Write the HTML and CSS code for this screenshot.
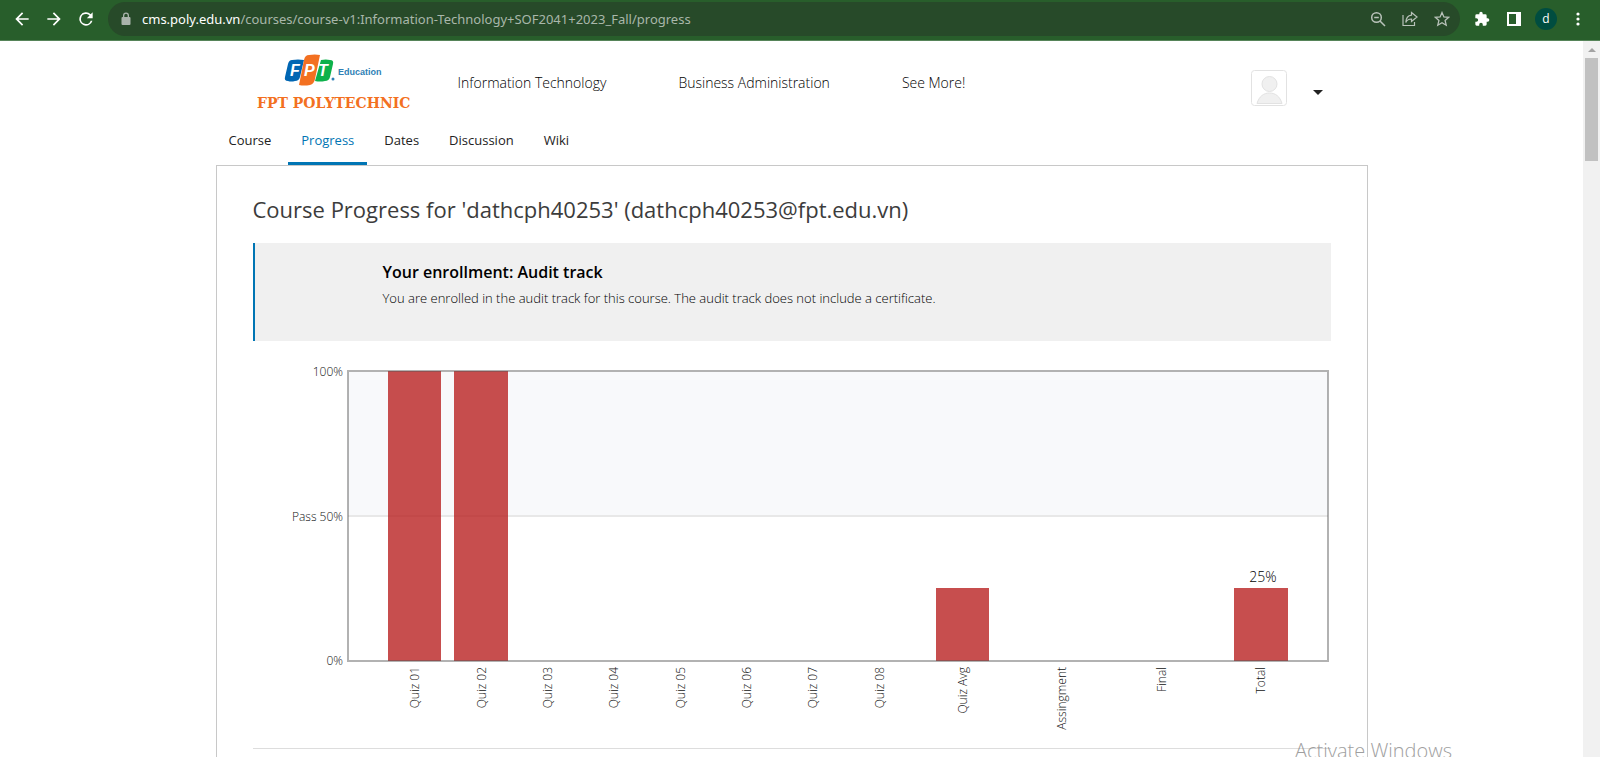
FILE: index.html
```html
<!DOCTYPE html>
<html lang="en">
<head>
<meta charset="utf-8">
<title>Course Progress</title>
<link rel="stylesheet" href="styles.css">
</head>
<body>
<div class="toolbar">
  <button class="tool" aria-label="Back"><svg class="icon" viewBox="0 0 24 24"><path fill="#fff" d="M20 11H7.83l5.59-5.59L12 4l-8 8 8 8 1.41-1.41L7.83 13H20z"/></svg></button>
  <button class="tool" aria-label="Forward"><svg class="icon" viewBox="0 0 24 24"><path fill="#fff" d="M4 11h12.170l-5.590-5.590L12 4l8 8-8 8-1.410-1.410L16.170 13H4z"/></svg></button>
  <button class="tool" aria-label="Reload"><svg class="icon" viewBox="0 0 24 24"><path fill="#fff" d="M17.650 6.350A8 8 0 1 0 19.730 14h-2.080A6 6 0 1 1 12 6c1.660 0 3.140.69 4.220 1.780L13 11h7V4z"/></svg></button>
  <div class="omnibox">
    <svg class="lock" viewBox="0 0 10 14"><path fill="#a9b3ab" d="M1.500 5H2V3.500a3 3 0 0 1 6 0V5h.5A1 1 0 0 1 9.500 6v6a1 1 0 0 1-1 1h-7a1 1 0 0 1-1-1V6a1 1 0 0 1 1-1zM3.300 5h3.400V3.500a1.700 1.700 0 0 0-3.400 0z"/></svg>
    <div class="url"><span class="host">cms.poly.edu.vn</span>/courses/course-v1:Information-Technology+SOF2041+2023_Fall/progress</div>
    <button class="tool" aria-label="Zoom"><svg class="icon small" viewBox="0 0 16 16" fill="none" stroke="#b9c2ba" stroke-width="1.500"><circle cx="6.500" cy="6.500" r="4.800"/><path d="M10 10l5 5M4.200 6.500h4.600"/></svg></button>
    <button class="tool" aria-label="Share"><svg class="icon small" viewBox="0 0 16 16" fill="none" stroke="#b9c2ba" stroke-width="1.200"><path d="M1 4v10.500h11.500V11M9.500 1.500l5.500 4.500-5.500 4.500V8C6.500 8 4.800 9 3.800 11.500 4 7.500 6 4.500 9.500 4.200z"/></svg></button>
    <button class="tool" aria-label="Bookmark"><svg class="icon small" viewBox="0 0 16 16" fill="none" stroke="#b9c2ba" stroke-width="1.300"><path d="M8 1.500l1.900 4.400 4.800.4-3.600 3.200 1.100 4.700L8 11.700l-4.200 2.500 1.100-4.700L1.300 6.300l4.800-.4z"/></svg></button>
  </div>
  <button class="tool" aria-label="Extensions"><svg class="icon small" viewBox="0 0 24 24"><path fill="#fff" d="M20.500 11H19V7a2 2 0 0 0-2-2h-4V3.500a2.500 2.500 0 0 0-5 0V5H4a2 2 0 0 0-2 2v3.800h1.500a2.700 2.700 0 0 1 0 5.400H2V20a2 2 0 0 0 2 2h3.800v-1.500a2.700 2.700 0 0 1 5.400 0V22H17a2 2 0 0 0 2-2v-4h1.500a2.500 2.500 0 0 0 0-5z"/></svg></button>
  <button class="tool" aria-label="Side panel"><svg class="icon small" viewBox="0 0 16 16"><path fill="#fff" fill-rule="evenodd" d="M1 1h14v14H1zM3 3v10h7V3z"/></svg></button>
  <button class="tool" aria-label="Profile"><span class="profile">d</span></button>
  <button class="tool" aria-label="Menu"><svg class="icon small" viewBox="0 0 16 16" fill="#fff"><circle cx="8" cy="3" r="1.600"/><circle cx="8" cy="8" r="1.600"/><circle cx="8" cy="13" r="1.600"/></svg></button>
</div>
<div class="viewport">
  <div class="page">
    <header class="header">
      <a class="logo" href="#"><svg viewBox="0 0 156 58" width="156" height="58" role="img" aria-label="FPT Education, FPT Polytechnic">
        <path fill="#0066b3" d="M37 6q6-1 12 0l-4 17q-1 4-5 4-4 1-7 0-4 0-3-4l3-13q1-4 4-4z"/>
        <path fill="#0db14b" d="M66 6q5-1 9 0 4 0 3 4l-3 13q-1 4-5 4-5 1-10 0z"/>
        <path fill="#f37021" d="M54 1q6-1 11 0l-5 24q-1 5-5 6-6 1-11 0l5-25q1-5 5-5z"/>
        <g class="logo-letters"><text x="35" y="22">F</text><text x="49" y="22">P</text><text x="63" y="22">T</text></g>
        <circle cx="78" cy="25" r="1.500" fill="#2f7fb5"/>
        <text class="logo-education" x="83" y="21">Education</text>
        <text class="logo-name" x="2" y="54">FPT POLYTECHNIC</text>
      </svg></a>
      <nav class="main-nav"><a href="#">Information Technology</a><a href="#">Business Administration</a><a href="#">See More!</a></nav>
      <div class="user">
        <svg class="avatar" viewBox="0 0 36 36" fill="#f0f0f0" stroke="#e2e2e2"><rect x=".5" y=".5" width="35" height="35" rx="3" fill="#fff"/><circle cx="18.500" cy="14" r="7.500"/><path d="M6 33.500c2-7 6.500-10.500 12.500-10.500S29 26.500 31 33.500z"/></svg>
        <button class="caret-button" aria-label="Account options"><svg class="caret" viewBox="0 0 10 5"><path fill="#222" d="M0 0h10L5 5z"/></svg></button>
      </div>
    </header>
    <nav class="tabs"><a href="#">Course</a><a class="active" href="#">Progress</a><a href="#">Dates</a><a href="#">Discussion</a><a href="#">Wiki</a></nav>
    <main class="content">
      <h1>Course Progress for 'dathcph40253' (dathcph40253@fpt.edu.vn)</h1>
      <section class="notice"><h2>Your enrollment: Audit track</h2><p>You are enrolled in the audit track for this course. The audit track does not include a certificate.</p></section>
      <svg class="chart" viewBox="0 0 1078 407" role="img" aria-label="Grades by assignment">
        <rect x="95" y="31" width="980" height="144" fill="#f8f9fb"/>
        <path d="M95 175h980" stroke="#e8e8e8" stroke-width="2"/>
        <g class="bars"><rect x="135" y="30" width="53" height="290"/><rect x="201" y="30" width="54" height="290"/><rect x="683" y="247" width="53" height="73"/><rect x="981" y="247" width="54" height="73"/></g>
        <rect x="95" y="30" width="980" height="290" fill="none" stroke="#545454" stroke-opacity=".45" stroke-width="2"/>
        <g class="axis" text-anchor="end">
          <text x="90" y="35">100%</text><text x="90" y="180">Pass 50%</text><text x="90" y="324">0%</text>
          <text transform="translate(166 326) rotate(-90)">Quiz 01</text>
          <text transform="translate(233 326) rotate(-90)">Quiz 02</text>
          <text transform="translate(299 326) rotate(-90)">Quiz 03</text>
          <text transform="translate(365 326) rotate(-90)">Quiz 04</text>
          <text transform="translate(432 326) rotate(-90)">Quiz 05</text>
          <text transform="translate(498 326) rotate(-90)">Quiz 06</text>
          <text transform="translate(564 326) rotate(-90)">Quiz 07</text>
          <text transform="translate(631 326) rotate(-90)">Quiz 08</text>
          <text transform="translate(714 326) rotate(-90)">Quiz Avg</text>
          <text transform="translate(813 326) rotate(-90)">Assingment</text>
          <text transform="translate(913 326) rotate(-90)">Final</text>
          <text transform="translate(1012 326) rotate(-90)">Total</text>
        </g>
        <text class="value" x="1010" y="241" text-anchor="middle">25%</text>
      </svg>
      <hr>
    </main>
  </div>
  <div class="scrollbar"><svg class="scroll-arrow" viewBox="0 0 8 4"><path fill="#a3a3a3" d="M4 0l4 4H0z"/></svg><div class="thumb"></div></div>
</div>
<div class="watermark">Activate Windows</div>
</body>
</html>
```
FILE: styles.css
```css
* { box-sizing: border-box; }
body { margin: 0; height: 100vh; display: flex; flex-direction: column; overflow: hidden; background: #fff; color: #000; font-family: "Open Sans", sans-serif; font-size: 13px; font-weight: 300; }
a { color: inherit; text-decoration: none; }
button { border: 0; padding: 0; background: none; font: inherit; }
h1, h2, p { margin: 0; }
svg { display: block; }

.toolbar { flex: none; height: 41px; display: flex; align-items: center; padding: 0 6px 3px; background: #285e2b; border-bottom: 1px solid #568459; font-weight: 400; }
.tool { width: 32px; display: flex; justify-content: center; align-items: center; }
.icon { width: 20px; height: 20px; }
.icon.small { width: 16px; height: 16px; }
.omnibox { flex: 1; height: 34px; margin: 0 6px; padding: 0 2px 0 13px; display: flex; align-items: center; border-radius: 17px; background: #274a29; }
.lock { width: 10px; height: 14px; }
.url { flex: 1; margin-left: 11px; color: #a9b7aa; font-family: "Noto Sans", sans-serif; font-size: 13px; }
.host { color: #fff; }
.profile { width: 22px; height: 22px; border-radius: 50%; background: #004d40; color: #fff; font-size: 12px; line-height: 22px; text-align: center; }

.viewport { flex: 1; min-height: 0; display: flex; }
.page { flex: 1; min-width: 0; overflow: hidden; }
.header, .tabs, .content { max-width: 1152px; margin: 0 auto; }
.header { height: 80px; display: flex; padding: 13px 45px 0 39px; }
.main-nav { flex: 1; display: flex; gap: 72px; margin-left: 47px; padding-top: 18px; font-size: 14px; line-height: 22px; }
.user { display: flex; gap: 26px; padding-top: 16px; }
.avatar { width: 36px; height: 36px; }
.caret-button { align-self: start; padding-top: 20px; }
.caret { width: 10px; height: 5px; }
.logo-letters { fill: #fff; font: italic bold 16px "Liberation Sans", sans-serif; }
.logo-education { fill: #2f7fb5; font: bold 9px "Liberation Sans", sans-serif; }
.logo-name { fill: #f37021; font: bold 14px "DejaVu Serif", serif; }

.tabs { height: 44px; display: flex; gap: 4px; font-weight: 400; color: #222; }
.tabs a { padding: 9px 13px 0; line-height: 20px; border-bottom: 3px solid transparent; }
.tabs .active { color: #0075b4; border-color: #0075b4; }

.content { padding: 27px 36px; border: 1px solid #c8c8c8; }
h1 { color: #3c3c3c; font-size: 22px; line-height: 32px; font-weight: 400; }
.notice { height: 98px; margin-top: 18px; padding: 17px 128px; border-left: 2px solid #0075b4; background: #f0f0f0; color: #000; }
h2 { font-size: 16px; line-height: 24px; font-weight: 600; }
.notice p { margin-top: 4px; line-height: 20px; }
.chart { width: 100%; }
.bars { fill: #b71c1c; fill-opacity: .78; }
.axis { fill: #111; font-size: 12px; }
.value { fill: #000; font-size: 14px; }
hr { margin: 0; border: 0; border-top: 1px solid #ddd; }

.scrollbar { width: 17px; padding: 7px 2px; background: #f1f1f1; }
.scroll-arrow { width: 8px; height: 4px; margin: 0 auto 6px; }
.thumb { height: 103px; background: #c1c1c1; }
.watermark { position: absolute; right: 148px; bottom: -8px; color: #777; opacity: .7; font-size: 20px; line-height: 28px; }
```
